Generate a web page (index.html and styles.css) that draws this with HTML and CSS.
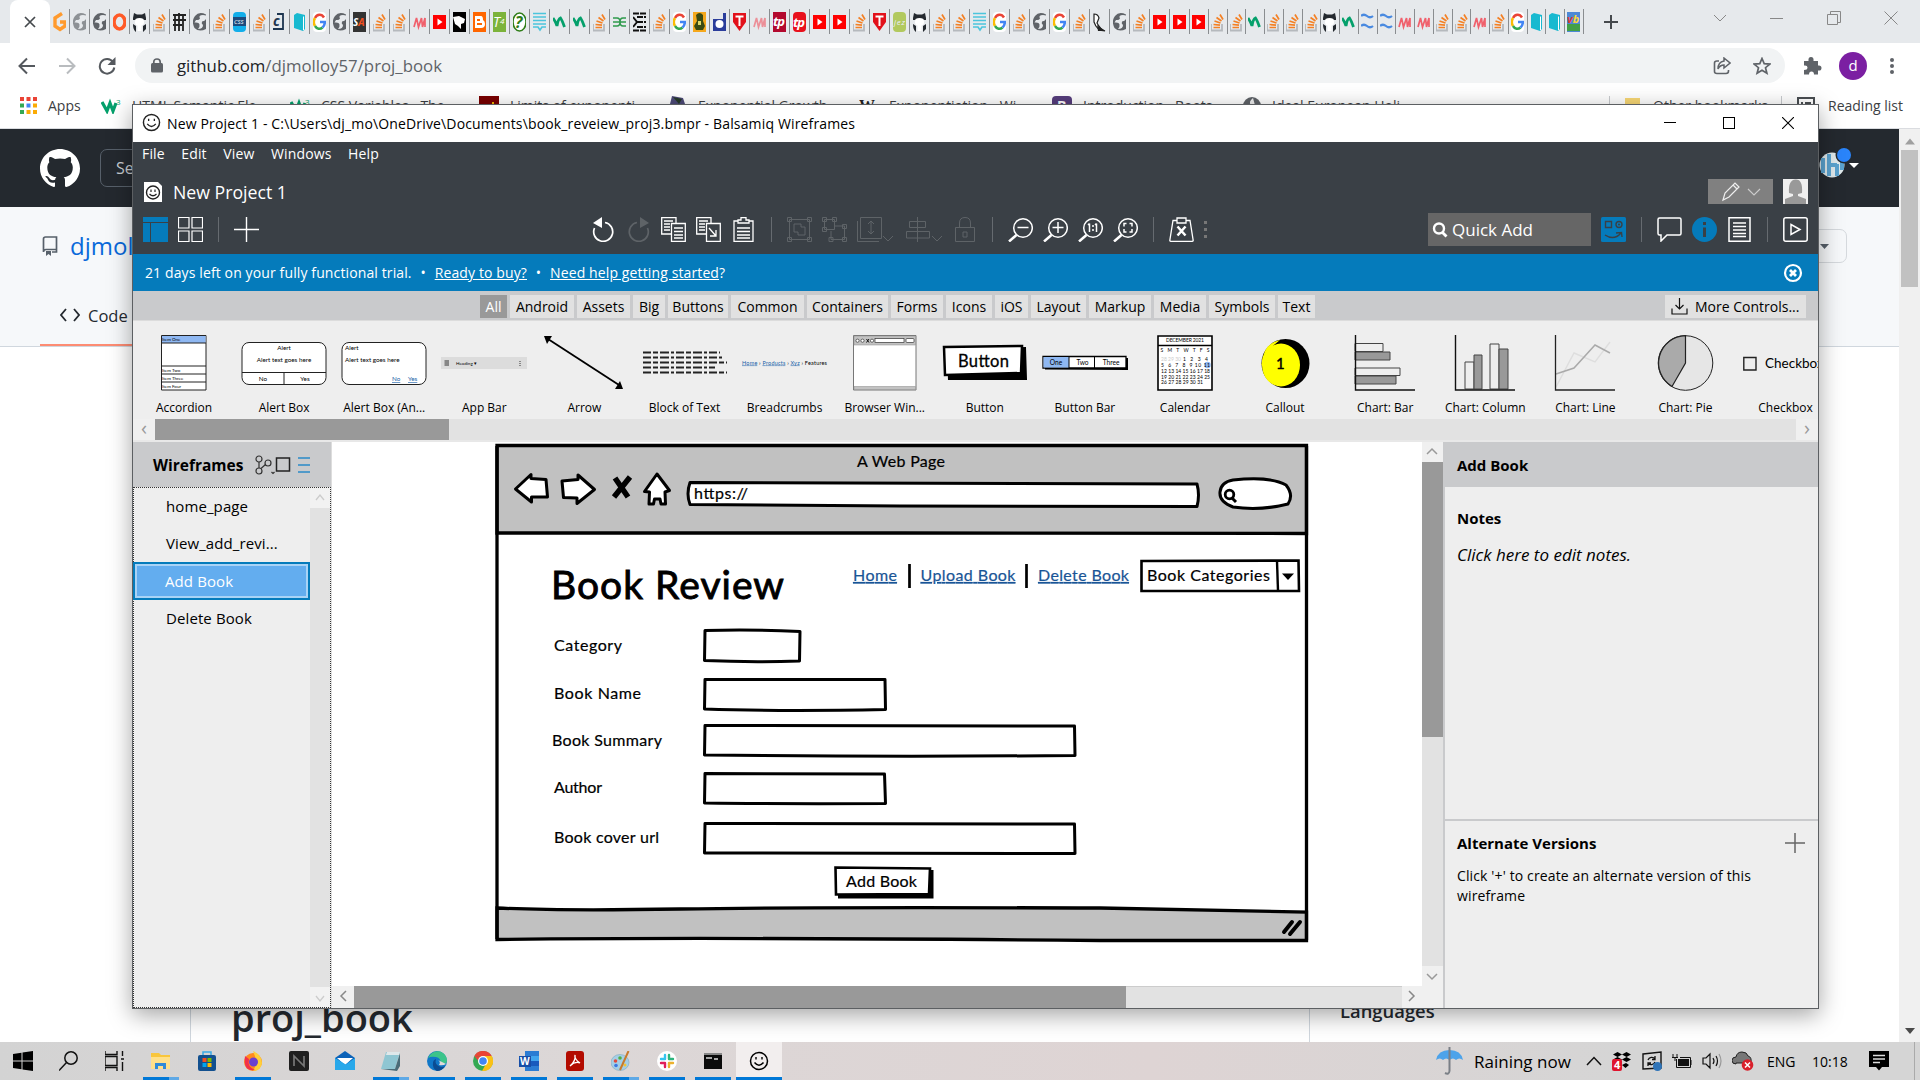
FILE: index.html
```html
<!DOCTYPE html>
<html lang="en">
<head>
<meta charset="utf-8">
<title>Desktop</title>
<link rel="stylesheet" href="styles.css">
</head>
<body>
<svg class="defs" width="0" height="0">
  <symbol id="so" viewBox="0 0 13 20"><path d="M0 12V18.500H11V12" fill="none" stroke="#b5b9bd" stroke-width="1.800"/><path d="M2.500 15.500H9M2.500 12.500L9 13.200M3.500 9L9.500 11M5.500 5.500L10.500 9M9 2.500L12 7.500" stroke="#f48024" stroke-width="1.700"/></symbol>
  <symbol id="globe" viewBox="0 0 13 20"><path d="M13 2.500Q6-1 2 4T1.500 16Q6 20.500 13 17Z" fill="#5f6368"/><path d="M13 3.500L10 3Q5 3 7 6.500 6 8.500 3 8L1.500 10.500Q6 10 6.500 12.500T5 17Q10 17 10 13 8 11.500 9 9.500 12 9 13 7Z" fill="#e7eaed"/></symbol>
  <symbol id="gh" viewBox="0 0 13 20"><path d="M1 1L4 2.500H9L12 1 13 6V8H0V6ZM0 12L3 14V20Q0 18 0 12ZM10 14L13 12V17L10 20Z" fill="#24292f"/><path d="M2.500 7Q6.500 5 10.500 7 12 13 8.500 13.500V19H4.500V13.500Q1 13 2.500 7Z" fill="#fff"/></symbol>
  <symbol id="goog" viewBox="0 0 13 20"><rect width="13" height="20" rx="4" fill="#fff"/><path d="M11 5.500A5.500 7 0 0 0 2 6" fill="none" stroke="#ea4335" stroke-width="2.500"/><path d="M2 6A6 7 0 0 0 2 14" fill="none" stroke="#fbbc05" stroke-width="2.500"/><path d="M2 14A5.500 7 0 0 0 9.500 15.500" fill="none" stroke="#34a853" stroke-width="2.500"/><path d="M7 10H11.800Q12 13 9.500 15.500" fill="none" stroke="#4285f4" stroke-width="2.500"/></symbol>
  <symbol id="yt" viewBox="0 0 13 20"><rect y="3" width="13" height="14" fill="#f00"/><path d="M4.500 6.500L9.500 10 4.500 13.500Z" fill="#fff"/></symbol>
  <symbol id="m" viewBox="0 0 13 20"><path d="M1 15L3.500 6 5.500 15 8.500 6 9.500 15 12 6V15" fill="none" stroke="#f0606c" stroke-width="1.700"/></symbol>
  <symbol id="w3" viewBox="0 0 13 20"><path d="M0 6Q3 10 4 14M4 14Q5 7 7.500 6 9 8 11.500 15" fill="none" stroke="#04a06b" stroke-width="2.800"/></symbol>
  <symbol id="lines" viewBox="0 0 13 20"><path d="M0 1.500H13M0 5H13M0 8.500H13M0 12H13M0 15H5L7 18 9 15H13" fill="none" stroke="#4cc5dc" stroke-width="1.600"/></symbol>
  <symbol id="book" viewBox="0 0 13 20"><path d="M1 3L4 1 12 3V17L10 19 1 16Z" fill="#18b9d0"/><path d="M10.500 4.500V18" stroke="#fff"/></symbol>
  <symbol id="waves" viewBox="0 0 13 20"><path d="M0 4Q3 1.500 6 4T12 4M0 14Q3 11.500 6 14T12 14" fill="none" stroke="#4a8ae0" stroke-width="2.200"/></symbol>
  <symbol id="tred" viewBox="0 0 13 20"><path d="M0 1H13V10L6.500 19 0 10Z" fill="#e2111b"/><path d="M2.500 4.500H10.500M6.500 4.500V14" stroke="#fff" stroke-width="2"/></symbol>
  <symbol id="smile" viewBox="0 0 20 20"><circle cx="10" cy="10" r="8.500" fill="none" stroke="currentColor" stroke-width="1.500"/><path d="M7 6V8.500M13 6V8.500M5.500 11.500Q10 17 14.500 11.500" fill="none" stroke="currentColor" stroke-width="1.400"/></symbol>
</svg>

<div class="chrome">
  <div class="tabstrip">
    <div class="active-tab"><svg width="12" height="12"><path d="M1 1L11 11M11 1L1 11" stroke="#45494d" stroke-width="1.700"/></svg></div>
    <i class="tab"><svg viewBox="0 0 13 20"><path d="M9 1.500L2 6V14L7 17.500 12 14V10H7" fill="none" stroke="#ff9a2e" stroke-width="3.400"/></svg></i><i class="tab faint"><svg><use href="#globe"/></svg></i><i class="tab"><svg><use href="#globe"/></svg></i><i class="tab"><svg viewBox="0 0 13 20"><ellipse cx="6.500" cy="10" rx="5.500" ry="7" fill="none" stroke="#ff5a28" stroke-width="3.500"/></svg></i><i class="tab"><svg><use href="#gh"/></svg></i><i class="tab"><svg><use href="#so"/></svg></i><i class="tab"><svg viewBox="0 0 13 20"><path d="M0 3H13M0 8H13M0 13H9M2 3V19M6 1V19M10 3V19" stroke="#222" stroke-width="1.800"/></svg></i><i class="tab"><svg><use href="#globe"/></svg></i><i class="tab"><svg><use href="#so"/></svg></i><i class="tab"><svg viewBox="0 0 13 20"><rect width="13" height="20" rx="4" fill="#12aeea"/><rect y="5" width="13" height="9" fill="#1d4a7d"/><text x="1" y="12" font-size="6" fill="#fff">CSS</text></svg></i><i class="tab"><svg><use href="#so"/></svg></i><i class="tab"><svg viewBox="0 0 13 20"><path d="M4 2H10V17H0" fill="none" stroke="#1d3550" stroke-width="1.800"/><text x="0" y="14" font-size="14" font-weight="bold" fill="#1d3550">c</text></svg></i><i class="tab"><svg><use href="#book"/></svg></i><i class="tab"><svg><use href="#goog"/></svg></i><i class="tab"><svg><use href="#globe"/></svg></i><i class="tab"><svg viewBox="0 0 13 20"><rect width="13" height="20" fill="#333"/><text x="0" y="14" font-size="10" font-weight="bold" fill="#fff">S<tspan fill="#f4511e">A</tspan></text></svg></i><i class="tab"><svg><use href="#so"/></svg></i><i class="tab"><svg><use href="#so"/></svg></i><i class="tab"><svg><use href="#m"/></svg></i><i class="tab"><svg><use href="#yt"/></svg></i><i class="tab"><svg viewBox="0 0 13 20"><rect width="13" height="20" fill="#000"/><path d="M0 5L6 4 12 7 11 11 8 12V17L5 14 2 12Z" fill="#fff"/></svg></i><i class="tab"><svg viewBox="0 0 13 20"><rect width="13" height="20" fill="#f60"/><path d="M2 4H8Q10 4 10 8 12 9 12 12 12 16 8 16H2Z" fill="#fff"/><path d="M4 8H7M4 12H9" stroke="#f60" stroke-width="1.800"/></svg></i><i class="tab"><svg viewBox="0 0 13 20"><rect width="13" height="20" fill="#7cb33b"/><text x="0" y="15" font-size="14" fill="#fff">T<tspan font-size="8" dy="-3">4</tspan></text></svg></i><i class="tab"><svg viewBox="0 0 13 20"><ellipse cx="6.500" cy="10" rx="6.500" ry="9" fill="#fff" stroke="#2f7d18" stroke-width="1.600"/><text x="2" y="16" font-size="16" font-weight="bold" fill="#2f7d18">?</text></svg></i><i class="tab"><svg><use href="#lines"/></svg></i><i class="tab"><svg><use href="#w3"/></svg></i><i class="tab"><svg><use href="#w3"/></svg></i><i class="tab"><svg><use href="#so"/></svg></i><i class="tab"><svg viewBox="0 0 13 20"><path d="M0 6H4Q7 6 7 10T4 14H0M0 10H13M13 6H10Q7 6 7 10T10 14H13" fill="none" stroke="#2f9a4c" stroke-width="1.500"/></svg></i><i class="tab"><svg viewBox="0 0 13 20"><path d="M0 1.500H13M0 18.500H13M4 5H13M4 10H13M4 15H13" stroke="#111" stroke-width="1.800" stroke-dasharray="6 1"/><path d="M0 5L4 10 0 15" fill="none" stroke="#111" stroke-width="2"/></svg></i><i class="tab"><svg><use href="#so"/></svg></i><i class="tab"><svg><use href="#goog"/></svg></i><i class="tab"><svg viewBox="0 0 13 20"><rect width="13" height="20" fill="#f5a81c"/><path d="M3 3Q6.500-1 10 3V9L12 14 10 18H3L1 14 4 9Z" fill="#3b4a12"/><path d="M5 9H8V13H5Z" fill="#dcd76a"/></svg></i><i class="tab"><svg viewBox="0 0 13 20"><path d="M10 1H13V19H0V7H10Z" fill="#2b3d9b"/><ellipse cx="6.500" cy="12" rx="4" ry="4" fill="#fff"/></svg></i><i class="tab"><svg><use href="#tred"/></svg></i><i class="tab faint"><svg><use href="#m"/></svg></i><i class="tab"><svg viewBox="0 0 13 20"><rect width="13" height="20" fill="#b3092e"/><text x="0" y="14" font-size="13" font-weight="bold" fill="#fff" textLength="12">tp</text></svg></i><i class="tab"><svg viewBox="0 0 13 20"><rect width="13" height="20" rx="4" fill="#e8101c"/><text x="0" y="15" font-size="13" font-weight="bold" fill="#fff" textLength="12">tp</text></svg></i><i class="tab"><svg><use href="#yt"/></svg></i><i class="tab"><svg><use href="#yt"/></svg></i><i class="tab"><svg><use href="#so"/></svg></i><i class="tab"><svg><use href="#tred"/></svg></i><i class="tab"><svg viewBox="0 0 13 20"><rect width="13" height="20" rx="4" fill="#b2c95e"/><text x="1" y="13" font-size="8" font-style="italic" fill="#eef" textLength="11">jez</text></svg></i><i class="tab"><svg><use href="#gh"/></svg></i><i class="tab"><svg><use href="#so"/></svg></i><i class="tab"><svg><use href="#so"/></svg></i><i class="tab"><svg><use href="#lines"/></svg></i><i class="tab"><svg><use href="#goog"/></svg></i><i class="tab"><svg><use href="#so"/></svg></i><i class="tab"><svg><use href="#globe"/></svg></i><i class="tab"><svg><use href="#goog"/></svg></i><i class="tab"><svg><use href="#so"/></svg></i><i class="tab"><svg viewBox="0 0 13 20"><path d="M1 2Q5 2 6 6L4 11Q7 17 12 19Q4 19 1 10Z" fill="#fff" stroke="#222" stroke-width="1.200"/><path d="M4 13L12 19H5Z" fill="#222"/></svg></i><i class="tab"><svg><use href="#globe"/></svg></i><i class="tab"><svg><use href="#so"/></svg></i><i class="tab"><svg><use href="#yt"/></svg></i><i class="tab"><svg><use href="#yt"/></svg></i><i class="tab slim"><svg><use href="#yt"/></svg></i><i class="tab slim"><svg><use href="#so"/></svg></i><i class="tab slim"><svg><use href="#so"/></svg></i><i class="tab slim"><svg><use href="#w3"/></svg></i><i class="tab slim"><svg><use href="#so"/></svg></i><i class="tab slim"><svg><use href="#so"/></svg></i><i class="tab slim"><svg><use href="#so"/></svg></i><i class="tab slim"><svg><use href="#gh"/></svg></i><i class="tab slim"><svg><use href="#w3"/></svg></i><i class="tab slim"><svg><use href="#waves"/></svg></i><i class="tab slim"><svg><use href="#waves"/></svg></i><i class="tab slim"><svg><use href="#m"/></svg></i><i class="tab slim"><svg><use href="#m"/></svg></i><i class="tab slim"><svg><use href="#so"/></svg></i><i class="tab slim"><svg><use href="#so"/></svg></i><i class="tab slim"><svg><use href="#m"/></svg></i><i class="tab slim"><svg><use href="#so"/></svg></i><i class="tab slim"><svg><use href="#goog"/></svg></i><i class="tab slim"><svg><use href="#book"/></svg></i><i class="tab slim"><svg><use href="#book"/></svg></i><i class="tab slim"><svg viewBox="0 0 13 20"><rect width="13" height="20" fill="#4d88d6"/><text x="0" y="11" font-size="11" font-weight="bold" fill="#e53935">v<tspan fill="#fdd835">b</tspan></text><rect y="12" width="13" height="7" fill="#43a047"/></svg></i>
    <svg class="newtab" width="16" height="16"><path d="M8 1V15M1 8H15" stroke="#45494d" stroke-width="2"/></svg>
    <div class="win-buttons">
      <svg width="14" height="14"><path d="M1 4L7 10 13 4" fill="none" stroke="#888" stroke-width="1"/></svg>
      <svg width="14" height="14"><path d="M0 7.500H13" stroke="#888"/></svg>
      <svg width="14" height="14"><path d="M.500 3.500H10.500V13.500H.500ZM3.500 3V.500H13.500V11.500H11" fill="none" stroke="#888"/></svg>
      <svg width="14" height="14"><path d="M.500.500L13.500 13.500M13.500.500L.500 13.500" stroke="#888"/></svg>
    </div>
  </div>
  <div class="navbar">
    <svg width="18" height="18"><path d="M17 9H2M9 1.500L1.500 9 9 16.500" fill="none" stroke="#55595e" stroke-width="2"/></svg>
    <svg width="18" height="18"><path d="M1 9H16M9 1.500L16.500 9 9 16.500" fill="none" stroke="#b9bcbf" stroke-width="2"/></svg>
    <svg width="18" height="18"><path d="M15 5A7.300 7.300 0 1 0 16.300 10.500" fill="none" stroke="#55595e" stroke-width="2"/><path d="M17.500 0V8H9.500Z" fill="#55595e"/></svg>
    <div class="omnibox">
      <svg width="12" height="15"><rect y="5" width="12" height="9.500" rx="1.500" fill="#5f6368"/><path d="M2.800 6V4Q2.800 1 6 1T9.200 4V6" fill="none" stroke="#5f6368" stroke-width="1.700"/></svg>
      <span class="url">github.com<em>/djmolloy57/proj_book</em></span>
      <svg width="18" height="18"><path d="M6 4H4Q1.500 4 1.500 6V14.500Q1.500 16.500 4 16.500H13Q15.500 16.500 15.500 14V13" fill="none" stroke="#5f6368" stroke-width="1.600"/><path d="M11 1L17 6 11 11V8Q7 8 5 12 5 5 11 4Z" fill="none" stroke="#5f6368" stroke-width="1.500"/></svg>
      <svg width="18" height="18"><path d="M9 1.500L11.200 6.700 16.800 7.100 12.500 10.700 13.900 16.200 9 13.200 4.100 16.200 5.500 10.700 1.200 7.100 6.800 6.700Z" fill="none" stroke="#5f6368" stroke-width="1.700"/></svg>
    </div>
    <svg class="puzzle" width="19" height="19"><path d="M1 5H5.500Q5 1 8 1T10.500 5H15V9.500Q18.500 9 18.500 12T15 14.500V18.500H11Q11 15.500 8.500 15.500T6 18.500H1V14Q4.500 14 4.500 11.500T1 9.500Z" fill="#5f6368"/></svg>
    <div class="profile">d</div>
    <svg class="dots" width="6" height="18"><circle cx="3" cy="3" r="2"/><circle cx="3" cy="9" r="2"/><circle cx="3" cy="15" r="2"/></svg>
  </div>
  <div class="bookmarks">
    <span class="bm"><svg width="17" height="17"><path d="M0 0h4v4H0zM6.500 0h4v4h-4zM13 0h4v4h-4z" fill="#ea4335"/><path d="M0 6.500h4v4H0zM0 13h4v4H0z" fill="#34a853"/><path d="M6.500 6.500h4v4h-4z" fill="#4285f4"/><path d="M13 6.500h4v4h-4zM6.500 13h4v4h-4zM13 13h4v4h-4z" fill="#fbab05"/></svg>Apps</span>
    <span class="bm"><svg width="20" height="16"><path d="M1 4L6 13 9 5 12 13 15 5" fill="none" stroke="#04a06b" stroke-width="3.200"/><text x="15" y="7" font-size="8" fill="#04a06b">3</text></svg>HTML Semantic Ele...</span>
    <span class="bm"><svg width="20" height="16"><path d="M1 4L6 13 9 5 12 13 15 5" fill="none" stroke="#04a06b" stroke-width="3.200"/><text x="15" y="7" font-size="8" fill="#04a06b">3</text></svg>CSS Variables - The...</span>
    <span class="bm"><svg width="20" height="20"><rect width="20" height="20" fill="#7a0000"/><path d="M3 9H7V14M9 9H12M14 6V14" stroke="#f0b400" stroke-width="2"/></svg>Limits of exponenti...</span>
    <span class="bm"><svg width="18" height="20"><path d="M3 0L14 2 17 11 9 18 0 12Z" fill="#4d4a78"/><path d="M4 1L13 3 10 8Z" fill="#263a28"/></svg>Exponential Growth...</span>
    <span class="bm"><svg width="19" height="16"><text x="0" y="13" font-size="16" font-family="Liberation Serif, serif" font-weight="bold" fill="#222">W</text></svg>Exponentiation - Wi...</span>
    <span class="bm"><svg width="20" height="20"><rect width="20" height="20" rx="4" fill="#563d7c"/><text x="5" y="15" font-size="14" font-weight="bold" fill="#fff">B</text></svg>Introduction · Boots...</span>
    <span class="bm"><svg width="18" height="18"><circle cx="9" cy="9" r="9" fill="#5f6368"/><path d="M10 1Q5 5 8 8L5 10 8 16 13 12Z" fill="#eee"/></svg>Ideal European Holi...</span>
    <span class="bm">»</span>
    <span class="bm ruled"><svg width="15" height="16"><path d="M0 0H15V15H0Z" fill="#f8d775"/></svg>Other bookmarks</span>
    <span class="bm ruled"><svg width="18" height="18"><rect x="1" y="1" width="16" height="15" fill="none" stroke="#4a4e52" stroke-width="2"/><path d="M4 6H6M8 6H14M4 10H6M8 10H14" stroke="#4a4e52" stroke-width="2"/></svg>Reading list</span>
  </div>
  <div class="page">
    <div class="site">
      <div class="gh-header">
        <svg class="octocat" width="40" height="39" viewBox="0 0 16 16" preserveAspectRatio="none"><path fill="#fff" d="M8 0C3.580 0 0 3.580 0 8c0 3.540 2.290 6.530 5.470 7.590.400.070.550-.170.550-.380 0-.190-.010-.820-.010-1.490-2.010.370-2.530-.490-2.690-.940-.090-.230-.480-.940-.820-1.130-.280-.150-.680-.520-.010-.530.630-.010 1.080.580 1.230.820.720 1.210 1.870.870 2.330.660.070-.520.280-.870.510-1.070-1.780-.200-3.640-.890-3.640-3.950 0-.870.310-1.590.820-2.150-.080-.200-.360-1.020.080-2.120 0 0 .670-.210 2.200.820.640-.180 1.320-.270 2-.270s1.360.090 2 .270c1.530-1.040 2.200-.820 2.200-.820.440 1.100.160 1.920.080 2.120.510.560.820 1.270.820 2.150 0 3.070-1.870 3.750-3.650 3.950.290.250.540.730.540 1.480 0 1.070-.010 1.930-.010 2.200 0 .210.150.460.550.380A8.010 8.010 0 0 0 16 8c0-4.420-3.580-8-8-8z"/></svg>
        <div class="gh-search">Se</div>
        <div class="gh-user"><svg width="42" height="34"><circle cx="14" cy="19" r="12.500" fill="#dfe9ec"/><path d="M5 12V27M11 8V30M19 18V30M24 14V24M11 19H19" stroke="#5ba3cf" stroke-width="4"/><circle cx="26" cy="9" r="8.500" fill="#24292f"/><circle cx="26" cy="9" r="7" fill="#2a84fa"/><path d="M31 17H41L36 22Z" fill="#fff"/></svg></div>
      </div>
      <div class="repo-head">
        <div class="repo-line">
          <svg width="16" height="20" viewBox="0 0 16 20"><path d="M1.500 16V3Q1.500 1 3.500 1H14.500V15.500M1.500 16Q1.500 13.500 4 13.500H14.500M10 16H14.500V13" fill="none" stroke="#57606a" stroke-width="1.700"/><path d="M4 15V20L6.500 18 9 20V15Z" fill="#57606a"/></svg>
          <span>djmol</span>
          <div class="split"><svg width="9" height="5"><path d="M0 0H9L4.500 5Z" fill="#57606a"/></svg></div>
        </div>
        <div class="repo-tab"><svg width="20" height="16"><path d="M6 2L1 8 6 14M14 2L19 8 14 14" fill="none" stroke="#24292f" stroke-width="1.800"/></svg>Code</div>
      </div>
      <div class="repo-body">
        <div class="readme">proj_book</div>
        <div class="side">Languages</div>
      </div>
    </div>
    <div class="page-scroll"><svg width="10" height="7"><path d="M0 6.500L5 0.500 10 6.500Z" fill="#a0a0a0"/></svg><div class="thumb"></div><svg class="down" width="10" height="6"><path d="M0 0H10L5 6Z" fill="#4a4a4a"/></svg></div>
  </div>
</div>

<div class="app">
  <div class="titlebar">
    <svg width="19" height="19"><use href="#smile"/></svg>
    <span class="title">New Project 1 - C:\Users\dj_mo\OneDrive\Documents\book_reveiew_proj3.bmpr - Balsamiq Wireframes</span>
    <svg width="12" height="12"><path d="M0 5.500H12" stroke="#000"/></svg>
    <svg width="12" height="12"><rect x=".5" y=".5" width="11" height="11" fill="none" stroke="#000"/></svg>
    <svg width="12" height="12"><path d="M0 0L12 12M12 0L0 12" stroke="#000" stroke-width="1.100"/></svg>
  </div>
  <div class="dark">
    <div class="menu"><span>File</span><span>Edit</span><span>View</span><span>Windows</span><span>Help</span></div>
    <div class="project">
      <svg width="18" height="20"><path d="M0 0H14L18 4V20H0Z" fill="#fff"/><circle cx="9" cy="10.500" r="6.500" fill="none" stroke="#222" stroke-width="1.400"/><path d="M7 7.500V10M11 7.500V10M5.500 12Q9 15.500 12.500 12" fill="none" stroke="#222" stroke-width="1.200"/></svg>
      <span class="name">New Project 1</span>
      <div class="edit"><svg width="40" height="20"><path d="M2 18L4 11 14 1 18 5 8 15ZM12 3L16 7" fill="none" stroke="#eee" stroke-width="1.200"/><path d="M27 7L33 13 39 7" fill="none" stroke="#ccc" stroke-width="1.100"/></svg></div>
      <svg width="25" height="25"><rect width="25" height="25" fill="#efefef"/><path d="M6 14Q5 1 12.500 0.500T19 14L15 15V17L23 20V25H2V20L10 17V15Z" fill="#999"/></svg>
    </div>
    <div class="toolbar">
      <div class="group left">
        <svg width="25" height="25"><rect width="25" height="25" fill="#057bbb"/><path d="M0 5.500H25M7.500 5.500V25" stroke="#3a4046"/></svg>
        <svg width="25" height="25"><path d="M.500.500H11V11H.500ZM14 .500H24.500V11H14ZM.500 14H11V24.500H.500ZM14 14H24.500V24.500H14Z" fill="none" stroke="#fff" stroke-width="1.200"/></svg>
        <i class="sep"></i>
        <svg width="25" height="25"><path d="M12.500 0V25M0 12.500H25" stroke="#fff" stroke-width="1.400"/></svg>
      </div>
      <div class="group mid">
        <svg width="25" height="25"><path d="M3.500 11A9.500 9.500 0 1 0 14 5.500" fill="none" stroke="#fff" stroke-width="1.700"/><path d="M2 6L11 0V11Z" fill="#fff"/></svg>
        <svg class="off" width="25" height="25"><path d="M21.500 11A9.500 9.500 0 1 1 11 5.500" fill="none" stroke="#fff" stroke-width="1.700"/><path d="M23 6L14 0V11Z" fill="#fff"/></svg>
        <svg width="25" height="25" fill="none" stroke="#fff" stroke-width="1.300"><path d="M10 17H.700V.700H15V6M10.500 6.500H24.300V24.300H10.500ZM3 4H12M3 7H9M3 10H9M3 13H9M13 11H22M13 14.500H22M13 18H22M13 21H22"/></svg>
        <svg width="25" height="25" fill="none" stroke="#fff" stroke-width="1.300"><path d="M10 17H.700V.700H15V6M10.500 6.500H24.300V24.300H10.500ZM3 4H12M3 7H9M3 10H9M3 13H9M13 11L20 19M20 13V19H14"/></svg>
        <svg width="25" height="25" fill="none" stroke="#fff" stroke-width="1.300"><path d="M7 4H3V24.300H22V4H18M7 6V3H10V.700H15V3H18V6ZM6 11H19M6 14.500H19M6 18H19M6 21H19"/></svg>
        <i class="sep"></i>
        <svg class="off" width="25" height="25" fill="none" stroke="#fff"><path d="M2.500 2.500H22.500V22.500H2.500ZM.500.500H4.500V4.500H.500ZM20.500.500H24.500V4.500H20.500ZM.500 20.500H4.500V24.500H.500ZM20.500 20.500H24.500V24.500H20.500ZM7 7H14V10H18V18H11V15H7Z"/></svg>
        <svg class="off" width="25" height="25" fill="none" stroke="#fff"><path d="M2.500 2.500H12.500V12.500H2.500ZM.500.500H4.500V4.500H.500ZM10.500.500H14.500V4.500H10.500ZM.500 10.500H4.500V14.500H.500ZM12.500 9H22.500V22.500H9V14M20.500 7.500H24.500V11.500H20.500ZM7 20.500H11V24.500H7ZM20.500 20.500H24.500V24.500H20.500Z"/></svg>
        <svg class="off" width="39" height="25" fill="none" stroke="#fff"><path d="M3.500.500H24.500V21.500H3.500ZM.500 4V24.500H22M14 4V17M11 7L14 4 17 7M11 14L14 17 17 14M26 19L31 24 36 19"/></svg>
        <svg class="off" width="36" height="25" fill="none" stroke="#fff"><path d="M11.500 0V25M3.500 4.500H19.500V10.500H3.500ZM.500 14.500H23.500V21H.500ZM26 19L31 24 36 19"/></svg>
        <svg class="off" width="25" height="25" fill="none" stroke="#fff"><path d="M3.500 10.500H22.500V24.500H3.500ZM7.500 10V6Q7.500.500 13 .500T18.500 6V10M11 15H15V20H11Z"/></svg>
        <i class="sep"></i>
        <svg width="25" height="25" fill="none" stroke="#fff" stroke-width="1.500"><circle cx="15" cy="11" r="9.300"/><path d="M9.500 10.500H20.500"/><path d="M8.500 18L1 24.500" stroke-width="2.500"/></svg>
        <svg width="25" height="25" fill="none" stroke="#fff" stroke-width="1.500"><circle cx="15" cy="11" r="9.300"/><path d="M9.500 10.500H20.500M15 5V16"/><path d="M8.500 18L1 24.500" stroke-width="2.500"/></svg>
        <svg width="25" height="25" fill="none" stroke="#fff" stroke-width="1.500"><circle cx="15" cy="11" r="9.300"/><path d="M11.500 6.500V15M18.500 6.500V15M10 8L11.500 6.500M17 8L18.500 6.500M15 8V10M15 12V14"/><path d="M8.500 18L1 24.500" stroke-width="2.500"/></svg>
        <svg width="25" height="25" fill="none" stroke="#fff" stroke-width="1.500"><circle cx="15" cy="11" r="9.300"/><path d="M13.500 6.500H11V9.500M16.500 6.500H19V9.500M13.500 15H11V12M16.500 15H19V12"/><path d="M8.500 18L1 24.500" stroke-width="2.500"/></svg>
        <i class="sep"></i>
        <svg width="25" height="25" fill="none" stroke="#fff" stroke-width="1.300"><path d="M8 3.500H4L.800 23.500Q1 24.300 2 24.300H23Q24 24.300 24.200 23.500L21 3.500H17M8 1H17V6H8Z"/><path d="M8.500 9.500L16.500 18.500M16.500 9.500L8.500 18.500" stroke-width="2.500"/></svg>
        <svg width="4" height="20" fill="#777"><path d="M0 1H3V4H0ZM0 8H3V11H0ZM0 15H3V18H0Z"/></svg>
      </div>
      <div class="group right">
        <div class="quick"><svg width="16" height="16"><circle cx="7" cy="6.500" r="5" fill="none" stroke="#fff" stroke-width="2.400"/><path d="M10 10L14.500 14.500" stroke="#fff" stroke-width="2.800"/></svg>Quick Add</div>
        <svg width="25" height="25"><rect width="25" height="25" rx="1.500" fill="#057bbb"/><path d="M4.500 4.500H10.500V10.500H4.500ZM4 18Q13 24 20 16M15 16L20.500 15.500 21 20" fill="none" stroke="#3a4046" stroke-width="1.400"/><circle cx="18" cy="7.500" r="3" fill="none" stroke="#3a4046" stroke-width="1.400"/><circle cx="18" cy="7.500" r="1" fill="#3a4046"/></svg>
        <i class="sep"></i>
        <svg width="25" height="25" fill="none" stroke="#fff" stroke-width="1.500"><path d="M2.500 1H22.500Q24 1 24 2.500V16.500Q24 18 22.500 18H10L4 24V18H2.500Q1 18 1 16.500V2.500Q1 1 2.500 1Z"/></svg>
        <svg width="25" height="25"><circle cx="12.500" cy="12.500" r="12.500" fill="#057bbb"/><path d="M12.500 5V8M12.500 10.500V20" stroke="#3a4046" stroke-width="3"/></svg>
        <svg width="25" height="25" fill="none" stroke="#fff" stroke-width="1.500"><path d="M2 .800H23V24.200H2ZM6 6H19M6 9.500H19M6 13H19M6 16.500H19M6 19.500H19"/></svg>
        <i class="sep"></i>
        <svg width="25" height="25" fill="none" stroke="#fff" stroke-width="1.500"><rect x=".8" y=".8" width="23.400" height="23.400" rx="2"/><path d="M8 7.500L17 12.500 8 17.500Z"/></svg>
      </div>
    </div>
  </div>
  <div class="trial"><span>21 days left on your fully functional trial.</span><b>•</b><u>Ready to buy?</u><b>•</b><u>Need help getting started</u><span>?</span><svg width="20" height="20"><circle cx="10" cy="10" r="8" fill="none" stroke="#fff" stroke-width="2.200"/><path d="M7 7L13 13M13 7L7 13" stroke="#fff" stroke-width="2.800"/></svg></div>
  <div class="catbar">
    <div class="cats"><span class="on">All</span><span>Android</span><span>Assets</span><span>Big</span><span>Buttons</span><span>Common</span><span>Containers</span><span>Forms</span><span>Icons</span><span>iOS</span><span>Layout</span><span>Markup</span><span>Media</span><span>Symbols</span><span>Text</span></div>
    <div class="more-controls"><svg width="17" height="17"><path d="M1 10.500V16H16V10.500M8.500 0V11M4.500 7L8.500 11 12.500 7" fill="none" stroke="#111" stroke-width="1.200"/></svg>More Controls...</div>
  </div>
  <div class="library">
    <figure><svg viewBox="0 0 86 56"><path d="M20.500.500H65V55H20.500Z" fill="#fff" stroke="#222"/><path d="M21 1H64.500V8H21Z" fill="#8fb8f2"/><path d="M20 8H65M20 31H65M20 39H65M20 47H65" stroke="#222"/><g font-size="4.500"><text x="21" y="6">Item One</text><text x="21" y="36.500">Item Two</text><text x="21" y="44.500">Item Three</text><text x="21" y="52.500">Item Four</text></g></svg><figcaption>Accordion</figcaption></figure>
    <figure><svg viewBox="0 0 86 56"><rect x="1" y="7.500" width="84" height="42" rx="7" fill="#fff" stroke="#222"/><path d="M1 37.500H85M43 37.500V49" stroke="#222"/><g font-size="6.300" text-anchor="middle"><text x="43" y="15">Alert</text><text x="43" y="26.500">Alert text goes here</text><text x="22" y="46">No</text><text x="64" y="46">Yes</text></g></svg><figcaption>Alert Box</figcaption></figure>
    <figure><svg viewBox="0 0 86 56"><rect x="1" y="7.500" width="84" height="42" rx="7" fill="#fff" stroke="#222"/><g font-size="6.300"><text x="4" y="15">Alert</text><text x="4" y="26.500">Alert text goes here</text><g fill="#1a5fa8" text-decoration="underline"><text x="51" y="46">No</text><text x="67" y="46">Yes</text></g></g></svg><figcaption>Alert Box (An...</figcaption></figure>
    <figure><svg viewBox="0 0 86 56"><path d="M0 22H86V34H0Z" fill="#dcdcdc"/><path d="M3.500 26H8M3.500 28H8M3.500 30H8M79 26V27M79 28V29M79 30V31" stroke="#333"/><text x="15" y="29.500" font-size="4.600">Heading ▾</text></svg><figcaption>App Bar</figcaption></figure>
    <figure><svg viewBox="0 0 86 56"><path d="M7 4L78 50" stroke="#000" stroke-width="1.800"/><path d="M3 1H11L6 9ZM82 54H74L79 46Z"/></svg><figcaption>Arrow</figcaption></figure>
    <figure><svg viewBox="0 0 86 56"><path d="M1 17.500H78M1 22.500H80M1 27.500H85M1 32.500H73M1 37.500H85" stroke="#222" stroke-width="1.900" stroke-dasharray="8 2 5 2 9 2 3 2"/></svg><figcaption>Block of Text</figcaption></figure>
    <figure><svg viewBox="0 0 86 56"><text x="0" y="29.500" font-size="5.500" textLength="85"><tspan fill="#1a5fa8" text-decoration="underline">Home</tspan> › <tspan fill="#1a5fa8" text-decoration="underline">Products</tspan> › <tspan fill="#1a5fa8" text-decoration="underline">Xyz</tspan> › Features</text></svg><figcaption>Breadcrumbs</figcaption></figure>
    <figure><svg viewBox="0 0 86 56"><path d="M11.500.500H74V55H11.500Z" fill="#fff" stroke="#777"/><path d="M12 1H73.500V10H12ZM12 51.500H73.500V54.500H12Z" fill="#c2c2c2" stroke="#888" stroke-width=".5"/><rect x="33" y="3.500" width="29" height="4" fill="#fff" stroke="#333" stroke-width=".7"/><rect x="64" y="3.500" width="8" height="4" rx="1" fill="#fff" stroke="#333" stroke-width=".7"/><path d="M24.500 4L27 7.500M27 4L24.500 7.500" stroke="#111"/><circle cx="15.500" cy="5.700" r="1.600" fill="#fff" stroke="#333" stroke-width=".7"/><circle cx="20.500" cy="5.700" r="1.600" fill="#fff" stroke="#333" stroke-width=".7"/><circle cx="30" cy="5.700" r="1.600" fill="#fff" stroke="#333" stroke-width=".7"/></svg><figcaption>Browser Win...</figcaption></figure>
    <figure><svg viewBox="0 0 86 56"><path d="M5 14L84 12 85 45 6 45Z"/><path d="M2 12L80 11 79 38 3 40Z" fill="#fff" stroke="#000" stroke-width="2.500"/><text x="16" y="31.500" font-size="16.500" textLength="51" stroke="#000" stroke-width=".3">Button</text></svg><figcaption>Button</figcaption></figure>
    <figure><svg viewBox="0 0 86 56"><path d="M3 23H86V35L3 34.500Z"/><path d="M1 21.500H84V33H1Z" fill="#fff" stroke="#000" stroke-width="1.300"/><path d="M1.500 22H27V32.500H1.500Z" fill="#8fb8f2"/><path d="M27 21V33M52.500 21V33" stroke="#000"/><g font-size="6.600" text-anchor="middle"><text x="14" y="29.500">One</text><text x="40.500" y="29.500">Two</text><text x="69" y="29.500">Three</text></g></svg><figcaption>Button Bar</figcaption></figure>
    <figure><svg viewBox="0 0 86 56"><path d="M16 1H70V55H16Z" fill="#fff" stroke="#000" stroke-width="1.600"/><path d="M16 10.500H70" stroke="#000" stroke-width="1.600"/><circle cx="65.500" cy="30" r="3.200" fill="#8fb8f2"/><g font-size="5"><text x="24" y="7" textLength="38">DECEMBER 2021</text><text x="18.500" y="17" textLength="49" xml:space="preserve">S  M  T  W  T  F  S</text><text x="19" y="26" fill="#ccc" textLength="20">28 29 30</text><text x="41" y="26" textLength="25" xml:space="preserve">1  2  3  4</text><text x="19" y="32" textLength="49" xml:space="preserve">5  6  7  8  9 10 11</text><text x="19" y="38" textLength="49">12 13 14 15 16 17 18</text><text x="19" y="43.500" textLength="49">19 20 21 22 23 24 25</text><text x="19" y="49" textLength="42">26 27 28 29 30 31</text></g></svg><figcaption>Calendar</figcaption></figure>
    <figure><svg viewBox="0 0 86 56"><ellipse cx="43.500" cy="28.500" rx="24" ry="24.500"/><ellipse cx="39" cy="30" rx="19" ry="21.500" fill="#ff0"/><path d="M19.500 30Q21 8 38 5Q24 15 21 31" fill="#ff0"/><text x="34" y="34" font-size="15" stroke="#000" stroke-width=".4">1</text></svg><figcaption>Callout</figcaption></figure>
    <figure><svg viewBox="0 0 86 56" stroke="#444"><path d="M13 8.500H41V16.500H13ZM13 33H58V40.500H13Z" fill="#eee"/><path d="M13 17H48V25H13ZM13 41H54V49H13Z" fill="#999"/><path d="M13.500 0V55H73" fill="none" stroke="#111" stroke-width="1.400"/></svg><figcaption>Chart: Bar</figcaption></figure>
    <figure><svg viewBox="0 0 86 56" stroke="#444"><path d="M23 27H32V54H23ZM48 9H57V54H48Z" fill="#eee"/><path d="M32 20H40V54H32ZM57 14H66V54H57Z" fill="#999"/><path d="M13.500 0V55H73" fill="none" stroke="#111" stroke-width="1.400"/></svg><figcaption>Chart: Column</figcaption></figure>
    <figure><svg viewBox="0 0 86 56" fill="none"><path d="M14 52L32 18 53 27 68 7" stroke="#dedede" stroke-width="1.400"/><path d="M14 39L32 33 53 10 68 18" stroke="#aaa" stroke-width="1.500"/><path d="M13.500 0V55H73" stroke="#222" stroke-width="1.300"/></svg><figcaption>Chart: Line</figcaption></figure>
    <figure><svg viewBox="0 0 86 56"><circle cx="43.500" cy="28" r="27.300" fill="#e6e6e6" stroke="#222"/><path d="M43.500 28V.700A27.300 27.300 0 0 0 30 51.500Z" fill="#aaa" stroke="#222" stroke-width="1.200"/></svg><figcaption>Chart: Pie</figcaption></figure>
    <figure><svg viewBox="0 0 86 56"><path d="M.800 22.500H13V35H.800Z" fill="none" stroke="#222" stroke-width="1.400"/><text x="22" y="33" font-size="13.500">Checkbox</text></svg><figcaption>Checkbox</figcaption></figure>
  </div>
  <div class="hscroll"><i>‹</i><div class="track"><div class="thumb"></div></div><i>›</i></div>
  <div class="work">
    <div class="nav">
      <div class="nav-head"><strong>Wireframes</strong><svg width="58" height="20"><g fill="none" stroke="#333" stroke-width="1.200"><circle cx="4" cy="4" r="3"/><circle cx="4" cy="16" r="3"/><circle cx="13" cy="8" r="3"/><path d="M4 7V13M10.500 9.500L6 13.500M16.500 17L18 18.500 19.500 17"/></g><path d="M21.500 3H34.500V16H21.500Z" fill="none" stroke="#222" stroke-width="1.500"/><path d="M43 3H55M43 10H55M43 17H55" stroke="#2a8bc7" stroke-width="1.500"/></svg></div>
      <div class="nav-list">
        <div class="items"><div>home_page</div><div>View_add_revi...</div><div class="sel">Add Book</div><div>Delete Book</div></div>
        <div class="nav-scroll"><svg width="20" height="20"><path d="M6 12L10 7 14 12" fill="none" stroke="#ccc" stroke-width="1.300"/></svg><div></div><svg width="20" height="20"><path d="M6 9L10 14 14 9" fill="none" stroke="#ccc" stroke-width="1.300"/></svg></div>
      </div>
    </div>
    <div class="canvas">
      <div class="sheet">
        <svg class="wire" width="1090" height="544" viewBox="332 442 1090 544" fill="none" stroke="#000" stroke-width="3.300">
          <path d="M497 445.500L700 445H1306.500L1307 940 1100 940.500 700 938.500 497 939Z" fill="#fff" stroke="none"/>
          <path d="M497 445.500H1306.500V533.500L900 533 497 533Z" fill="#c1c1c1"/>
          <path d="M497 908Q560 911 680 909T1100 908L1306.500 912V940.500L1100 940.500Q700 937 497 939.500Z" fill="#c1c1c1"/>
          <path d="M497 446V939M1306.500 446V940"/>
          <g fill="#fff" stroke-width="3" stroke-linejoin="round">
            <path d="M515.500 489L531 474.500V478.500L546 479.500 547.500 497 531.500 497V502Z"/>
            <path d="M594.500 489.500L578 475V479.500L562 481 563.500 497.500 577 498V503.500Z"/>
            <path d="M657 474L644.500 491.500 649.500 492 649 504H653.500L654.500 499H660L661 504H665.500L665 492 669.500 490.500Z"/>
            <path d="M690 482.500L1197 484Q1200 495 1197 506.500L900 506 690 504.500Q686 494 690 482.500Z"/>
            <path d="M1233 480Q1270 476 1286 485Q1294 495 1288 504Q1260 511 1233 507Q1219 502 1220 492T1233 480Z"/>
          </g>
          <path d="M615 478L628 497M630 477L614 497" stroke-width="5.500"/>
          <circle cx="1229.500" cy="494.500" r="4.300" stroke-width="2.800"/><path d="M1232 498L1236 502" stroke-width="3"/>
          <path d="M909.500 564V588M1026.500 564V588" stroke-width="2.700"/>
          <path d="M1141.500 561L1298.500 560.500 1299 591 1141.500 591Z" stroke-width="2.600"/><path d="M1277 561L1278 591" stroke-width="2.400"/><path d="M1282 573.500H1294L1288 580Z" fill="#000" stroke="none"/>
          <g stroke-width="3" stroke-linejoin="round">
            <path d="M705 630.500Q750 629 800 631.500L799.500 661Q750 662.500 704.500 660.500Z"/>
            <path d="M705 679.500H885L885.500 709.500Q780 711.500 704.500 709Z"/>
            <path d="M705 725.500L1074.500 726 1075 755.500Q880 757 704.500 755Z"/>
            <path d="M705 773.500L884.500 774 885.500 803.500Q780 804 704.500 803Z"/>
            <path d="M705 823.500L1074.500 824 1075 853.500 704.500 853Z"/>
          </g>
          <path d="M838 870H933.500V898.500H838Z" fill="#000" stroke="none"/><path d="M835.500 867.500L930 868.500 929 894 836 894.500Z" fill="#fff" stroke-width="2.600"/>
          <path d="M1284 932L1292 922M1290 934L1300 922" stroke-width="4" stroke-linecap="round"/>
          <g class="hand">
            <text x="857" y="466.500" textLength="88">A Web Page</text>
            <text x="694" y="499" textLength="54">https://</text>
            <text class="big" x="551" y="599" textLength="233">Book Review</text>
            <g class="link"><text x="853" y="581" textLength="44">Home</text><text x="920.500" y="581" textLength="95">Upload Book</text><text x="1038" y="581" textLength="91">Delete Book</text></g>
            <text x="1147" y="581" textLength="123">Book Categories</text>
            <text x="554" y="651" textLength="68">Category</text>
            <text x="554" y="699" textLength="87">Book Name</text>
            <text x="552" y="746" textLength="110">Book Summary</text>
            <text x="554" y="793" textLength="48">Author</text>
            <text x="554" y="843" textLength="105">Book cover url</text>
            <text x="846" y="887" textLength="71">Add Book</text>
          </g>
        </svg>
        <div class="vscroll"><svg width="20" height="20"><path d="M5 12L10 7 15 12" fill="none" stroke="#999" stroke-width="1.500"/></svg><div class="track"><div class="thumb"></div></div><svg width="20" height="20"><path d="M5 8L10 13 15 8" fill="none" stroke="#999" stroke-width="1.500"/></svg></div>
      </div>
      <div class="bottom"><svg width="22" height="20"><path d="M14 5L9 10 14 15" fill="none" stroke="#888" stroke-width="1.500"/></svg><div class="track"><div class="thumb"></div></div><svg width="20" height="20"><path d="M7 5L12 10 7 15" fill="none" stroke="#888" stroke-width="1.500"/></svg></div>
    </div>
    <div class="props">
      <div class="props-head">Add Book</div>
      <div class="notes"><strong>Notes</strong><em>Click here to edit notes.</em></div>
      <div class="alt"><div class="alt-head"><strong>Alternate Versions</strong><svg width="20" height="20"><path d="M10 0V20M0 10H20" stroke="#666" stroke-width="1.500"/></svg></div><p>Click '+' to create an alternate version of this<br>wireframe</p></div>
    </div>
  </div>
</div>

<div class="taskbar">
  <div class="apps">
    <span><svg viewBox="0 0 20 20"><path d="M0 3L8.500 1.700V9.500H0ZM9.500 1.500L20 0V9.500H9.500ZM0 10.500H8.500V18.300L0 17ZM9.500 10.500H20V20L9.500 18.500Z"/></svg></span>
    <span><svg viewBox="0 0 20 20" fill="none" stroke="#111" stroke-width="1.500"><circle cx="12" cy="7" r="6.200"/><path d="M7.500 11.500L0 19.500"/></svg></span>
    <span><svg viewBox="0 0 20 20" fill="none" stroke="#111" stroke-width="1.400"><path d="M0 0V3.500H12V0M0 5.500H12V14.500H0ZM0 20V16.500H12V20M17.500 0V5M17.500 11V20M16 8H19"/></svg></span>
    <span class="run two"><svg viewBox="0 0 20 20"><path d="M0 2H8L10 4H19V18H0Z" fill="#f9c63c"/><path d="M0 6H19V18H0Z" fill="#ffe08a"/><path d="M4 18V12H15V18H12V15H7V18Z" fill="#2f8ad8"/></svg></span>
    <span><svg viewBox="0 0 20 20"><path d="M6 4V1H14V4" fill="none" stroke="#38a9e8" stroke-width="1.500"/><rect x="1" y="4" width="18" height="16" rx="2" fill="#12508f"/><path d="M5.500 7H9.500V11H5.500Z" fill="#f25022"/><path d="M10.500 7H14.500V11H10.500Z" fill="#7fba00"/><path d="M5.500 12H9.500V16H5.500Z" fill="#00a4ef"/><path d="M10.500 12H14.500V16H10.500Z" fill="#ffb900"/></svg></span>
    <span class="run"><svg viewBox="0 0 20 20"><circle cx="10" cy="11" r="9" fill="#ff8a1e"/><path d="M10 0Q19 4 19 12Q18 20 10 20Q14 14 13 8Z" fill="#ffcf3a"/><path d="M2 5Q1 12 3 16Q6 20 12 19Q4 16 6 8Z" fill="#f2304a"/><circle cx="10.500" cy="11" r="4.500" fill="#6b3fd1"/></svg></span>
    <span><svg viewBox="0 0 20 20"><rect width="20" height="20" rx="2" fill="#1f1f1f"/><path d="M5 15V5L15 15V5" fill="none" stroke="#777" stroke-width="1.700"/></svg></span>
    <span><svg viewBox="0 0 20 20"><path d="M0 7L10 0 20 7V19H0Z" fill="#0b62b8"/><path d="M2 7H18L10 14Z" fill="#fff"/><path d="M0 7L20 19H0ZM20 7V19L10 14Z" fill="#28a8ea"/></svg></span>
    <span class="run two"><svg viewBox="0 0 20 20"><path d="M5 1H19L14 18H0Z" fill="#8fc6d2"/><path d="M0 18H14L19 2V15L16 20Z" fill="#4a6c78"/><path d="M6 1H19L18 4H5Z" fill="#dfe8ea"/></svg></span>
    <span class="run"><svg viewBox="0 0 20 20"><circle cx="10" cy="10" r="10" fill="#1178c8"/><path d="M1 7Q5-1 13 .500Q20 3 20 10Q19 14 14 13Q14 7 9 6 4 5 1 7Z" fill="#3cc48a"/><path d="M9 8Q7 14 14 16Q17 16 18 15Q15 20 10 20Q5 17 6 12Q6 9 9 8Z" fill="#0b4c92"/><path d="M11 9Q14 11 12 14Q16 15 19 13" fill="#e0dada"/></svg></span>
    <span class="run"><svg viewBox="0 0 20 20"><circle cx="10" cy="10" r="10" fill="#34a853"/><path d="M1.300 5A10 10 0 0 1 18.700 5L10 6Z" fill="#ea4335"/><path d="M1.300 5L7 12 10 10 10 6Z" fill="#ea4335"/><path d="M18.700 5A10 10 0 0 1 9 20L14 11 10 5Z" fill="#fbc116"/><circle cx="10" cy="10" r="5" fill="#fff"/><circle cx="10" cy="10" r="3.800" fill="#4285f4"/></svg></span>
    <span class="run"><svg viewBox="0 0 20 20"><path d="M6 0H20V20H6Z" fill="#2b7cd3"/><path d="M6 5H20V10H6Z" fill="#41a5ee"/><path d="M6 10H20V15H6Z" fill="#185abd"/><rect y="5" width="12" height="11" fill="#174ea6"/><text x="1" y="14" font-size="10" font-weight="bold" fill="#fff">W</text></svg></span>
    <span class="run"><svg viewBox="0 0 20 20"><rect x="1" width="18" height="20" rx="3" fill="#b30b00"/><path d="M5 15Q11 10 10 4Q9 8 15 12Q10 10 5 15Z" fill="none" stroke="#fff" stroke-width="1.300"/></svg></span>
    <span class="run two"><svg viewBox="0 0 20 20"><ellipse cx="9" cy="11.500" rx="9" ry="8" fill="#a5cfe6" stroke="#7fa9bf" stroke-width=".6"/><circle cx="4.500" cy="10" r="1.800" fill="#e24a3b"/><circle cx="9" cy="7" r="1.800" fill="#52b043"/><circle cx="5" cy="14.500" r="1.800" fill="#3b78e2"/><circle cx="14" cy="14" r="1.500" fill="#f3c433"/><path d="M17.500 0L9 19" stroke="#c97a2b" stroke-width="2"/></svg></span>
    <span class="run"><svg viewBox="0 0 20 20"><circle cx="10" cy="10" r="10" fill="#fff"/><g stroke-width="2.400" stroke-linecap="round"><path d="M8 4V8M4 8H8" stroke="#36c5f0"/><path d="M12 4V8M16 8H12" stroke="#2eb67d"/><path d="M12 16V12M16 12H12" stroke="#ecb22e"/><path d="M8 16V12M4 12H8" stroke="#e01e5a"/></g></svg></span>
    <span class="run"><svg viewBox="0 0 20 20"><path d="M1 2H19V18H1Z" fill="#0b0b0b"/><path d="M1 2H19V4H1Z" fill="#888"/><path d="M3 7H9M11 8H15" stroke="#ddd" stroke-width="1.500"/></svg></span>
    <span class="run current"><svg viewBox="0 0 20 20"><use href="#smile"/></svg></span>
  </div>
  <div class="tray">
    <svg width="27" height="28"><path d="M0 13Q2 3 13.500 3T27 13Q23 10 20 13 17 10 13.500 13 10 10 7 13 4 10 0 13Z" fill="#4da3ea"/><path d="M13.500 0V24Q13 28 9 26" fill="none" stroke="#7a7f86" stroke-width="2"/></svg>
    <span class="weather">Raining now</span>
    <svg width="16" height="10"><path d="M1 9L8 1.500 15 9" fill="none" stroke="#111" stroke-width="1.500"/></svg>
    <svg width="20" height="20"><path d="M1 3.500L5.500 1 10 3.500 14.500 1 19 3.500 14.500 6 19 8.500 14.500 11 10 8.500 5.500 11 1 8.500 5.500 6ZM10 14L14 12 17 14 13.500 17Z"/><path d="M10 3.500L14.500 6 10 8.500 5.500 6Z" fill="#d8d8d8"/><rect y="8" width="10" height="12" rx="2" fill="#e0142d"/><text x="2" y="18" font-size="11" font-weight="bold" fill="#fff">4</text></svg>
    <svg width="20" height="20"><path d="M1 3L19 1V17L1 18Z" fill="none" stroke="#111" stroke-width="1.400"/><path d="M13 8A4 4 0 0 0 6 9M6 12A4 4 0 0 0 13 11M13 5V8.500H10M6 15V12H9" fill="none" stroke="#111" stroke-width="1.300"/><circle cx="15.500" cy="15.500" r="4.500" fill="#2f74b8"/></svg>
    <svg width="20" height="16"><path d="M6 6H17V13H6Z" fill="#111"/><path d="M4.500 6V14.500H18.500V4.500H8M20 7V12M1 1V4M5 1V4M0 4.500H6M3 5V8" fill="none" stroke="#111"/></svg>
    <svg width="20" height="18" fill="none" stroke="#111" stroke-width="1.200"><path d="M1 6H4L8 2V16L4 12H1ZM11 6Q13 9 11 12M14 4Q17 9 14 14"/><path d="M17 2Q21 9 17 16" stroke="#999"/></svg>
    <svg width="22" height="20"><path d="M4 13Q0 13 0 9.500T4 6Q5 1 10 1T16 5Q20 6 19 12H4Z" fill="#777" stroke="#222"/><circle cx="15.500" cy="14" r="5.800" fill="#d9202b"/><path d="M13 11.500L18 16.500M18 11.500L13 16.500" stroke="#fff" stroke-width="1.500"/></svg>
    <span class="lang">ENG</span><span class="clock">10:18</span>
    <svg width="20" height="20"><path d="M0 0H20V16H13L10 19.500 7 16H0Z"/><path d="M4 4.500H16M4 8H16M4 11.500H11" stroke="#ddd" stroke-width="1.400"/></svg>
    <i class="show-desktop"></i>
  </div>
</div>
</body>
</html>
```
FILE: styles.css
```css
* { box-sizing: border-box; }
body {
  margin: 0;
  width: 1920px;
  height: 1080px;
  overflow: hidden;
  position: relative;
  font-family: "Open Sans", "Noto Sans", sans-serif;
  font-size: 14px;
  color: #000;
}
svg { display: block; flex: none; }
.defs { position: absolute; }

/* browser window */
.chrome { height: 1042px; display: flex; flex-direction: column; background: #fff; }
.tabstrip { height: 43px; background: #e6e9ec; display: flex; align-items: center; padding-left: 10px; }
.active-tab { width: 40px; height: 43px; background: #fff; border-radius: 8px 8px 0 0; display: flex; align-items: center; justify-content: center; }
.tab { width: 20px; height: 25px; border-right: 1px solid #8a8d90; flex: none; display: flex; align-items: center; padding-left: 3px; }
.tab.slim { width: 18.75px; padding-left: 2px; }
.tab svg { width: 13px; height: 20px; }
.tab.faint svg { opacity: .65; }
.newtab { margin-left: 19px; }
.win-buttons { margin-left: auto; display: flex; gap: 43px; padding-right: 22px; margin-top: -7px; }

.navbar { height: 45px; display: flex; align-items: center; padding-left: 18px; gap: 22px; }
.omnibox { width: 1650px; height: 35px; margin-left: -3px; border-radius: 18px; background: #f1f3f4; display: flex; align-items: center; padding: 0 14px 0 16px; gap: 22px; flex: none; }
.url { flex: 1; margin-left: -8px; font-size: 16.8px; color: #202124; }
.url em { font-style: normal; color: #5f6368; }
.puzzle { margin-left: -4px; }
.profile { width: 28px; height: 28px; border-radius: 50%; background: #7b1fa2; color: #fff; font-size: 15px; line-height: 27px; text-align: center; margin-left: -5px; }
.dots { fill: #5f6368; }

.bookmarks { height: 41px; border-bottom: 1px solid #dadce0; padding: 0 0 5px 20px; display: grid; grid-template-columns: 81px 189px 189px 190px 190px 193px 191px 344px 22px 172px 132px; align-items: center; color: #3c4043; }
.bm { display: flex; align-items: center; gap: 11px; white-space: nowrap; }
.bm.ruled { border-left: 1px solid #c8cbce; padding-left: 15px; gap: 13px; }

.page { flex: 1; display: flex; min-height: 0; }
.site { width: 1899px; display: flex; flex-direction: column; }
.page-scroll { flex: 1; background: #f0f0f0; display: flex; flex-direction: column; align-items: center; padding: 9px 0 8px; }
.page-scroll .thumb { width: 17px; height: 137px; margin-top: 5px; background: #c1c1c1; }
.page-scroll .down { margin-top: auto; }
.gh-header { height: 78px; background: #24292f; display: flex; align-items: center; padding: 0 39px 0 40px; }
.gh-search { margin-left: 20px; width: 400px; height: 38px; border: 1px solid #57606a; border-radius: 7px; padding-left: 15px; line-height: 36px; font-size: 16px; color: #c8cdd2; }
.gh-user { margin-left: auto; margin-bottom: 10px; }
.repo-head { height: 140px; background: #f6f8fa; border-bottom: 1px solid #d0d7de; display: flex; flex-direction: column; justify-content: space-between; padding: 22px 52px 0 42px; }
.repo-line { display: flex; align-items: center; font-size: 24px; line-height: 34px; color: #0969da; }
.repo-line span { margin-left: 12px; }
.split { margin-left: auto; width: 80px; height: 34px; border: 1px solid #d5d9dd; border-radius: 7px; display: flex; align-items: center; justify-content: flex-end; padding-right: 17px; }
.repo-tab { width: 110px; height: 60px; margin-left: -2px; border-bottom: 2px solid #fd8c73; display: flex; align-items: center; gap: 8px; padding-left: 20px; font-size: 16.5px; color: #24292f; }
.repo-body { flex: 1; display: flex; align-items: flex-end; padding-left: 190px; color: #24292f; font-weight: 600; }
.readme { width: 1120px; height: 690px; border: solid #d0d7de; border-width: 0 1px; padding: 640px 0 0 40px; font-size: 38px; line-height: 50px; }
.side { height: 45px; padding-left: 30px; font-size: 18.4px; line-height: 27px; }

/* application window */
.app { position: absolute; left: 132px; top: 104px; width: 1687px; height: 905px; border: 1px solid #5c5f62; background: #eee; display: flex; flex-direction: column; box-shadow: 0 6px 22px rgba(0, 0, 0, .36); }
.titlebar { height: 37px; background: #fff; display: flex; align-items: center; padding: 0 24px 2px 9px; gap: 47px; color: #222; }
.titlebar .title { flex: 1; margin-left: -41px; color: #000; letter-spacing: .15px; padding-top: 1px; }
.dark { background: #3a4046; color: #fff; height: 112px; }
.menu { display: flex; height: 25px; padding-left: 9px; gap: 16.5px; line-height: 24px; letter-spacing: .15px; }
.project { height: 49px; display: flex; align-items: center; padding: 0 10px 0 11px; }
.project .name { flex: 1; margin-left: 11px; font-size: 17.7px; }
.edit { width: 65px; height: 25px; margin-right: 10px; background: #808080; display: flex; align-items: center; justify-content: center; }
.toolbar { display: flex; height: 38px; padding: 0 10px 11px; }
.group { display: flex; align-items: center; gap: 10px; }
.group.left { width: 448px; }
.group.mid { flex: 1; }
.sep { width: 1px; height: 25px; background: #666b70; margin: 0 5px; }
.off { opacity: .18; }
.quick { width: 163px; height: 33px; background: #666; display: flex; align-items: center; gap: 4px; padding-left: 4px; font-size: 17px; flex: none; }
.trial { height: 37px; background: #057bbb; color: #fff; display: flex; align-items: center; padding: 0 15px 0 12px; letter-spacing: .12px; }
.trial b { width: 23px; text-align: center; font-weight: 400; }
.trial svg { margin-left: auto; }

.catbar { height: 30px; background: #c9cacc; border-bottom: 1px solid #dcdcdc; display: flex; align-items: center; padding: 0 12px 0 347px; justify-content: space-between; }
.cats { display: grid; grid-template-columns: 27px 64px 53px 32px 60px 73px 81px 52px 46px 33px 55px 62px 52px 66px 37px; gap: 3px; margin-top: 2px; }
.cats span, .more-controls { height: 23px; line-height: 23px; background: #e1e1e1; text-align: center; white-space: nowrap; }
.cats .on { background: #999; color: #fff; }
.more-controls { width: 141px; display: flex; align-items: center; gap: 7px; padding-left: 6px; margin-top: 2px; }

.library { height: 98px; display: flex; padding: 14px 0 0 1px; overflow: hidden; }
.library figure { margin: 0; width: 100.1px; flex: none; display: flex; flex-direction: column; align-items: center; }
.library figure svg { width: 86px; height: 56px; font-family: Lato, sans-serif; overflow: visible; }
.library figcaption { margin-top: 8px; font-size: 12px; line-height: 18px; white-space: nowrap; }

.hscroll { height: 23px; display: flex; border-bottom: 2px solid #e8e8e8; }
.hscroll i { width: 22px; font-style: normal; font-size: 20px; line-height: 18px; text-align: center; color: #999; background: #f0f0f0; }
.hscroll .track { flex: 1; background: #e2e2e2; }
.hscroll .thumb { width: 294px; height: 21px; background: #999; }

.work { flex: 1; display: flex; min-height: 0; }
.nav { width: 199px; display: flex; flex-direction: column; border-right: 1px solid #ddd; }
.nav-head { height: 45px; background: #c9cacc; display: flex; align-items: center; padding-left: 20px; font-size: 15.5px; gap: 12px; }
.nav-list { flex: 1; border: 1px dotted #333; display: flex; }
.items { width: 176px; font-size: 15px; letter-spacing: .1px; }
.items div { height: 37.2px; line-height: 37px; padding-left: 32px; }
.items .sel { border: 2px solid #057bbb; outline: 2px solid #a9d3f6; outline-offset: -4px; background: radial-gradient(circle at 1px 1px, #d8ecfb 1px, transparent 1px) 7px 4px / 3px 3px no-repeat, #63adef; background: #63adef; color: #fff; line-height: 34px; padding-left: 30px; margin-left: -1px; width: 177px; }
.nav-scroll { flex: 1; display: flex; flex-direction: column; background: #f2f2f2; }
.nav-scroll div { flex: 1; background: #e2e2e2; }

.canvas { width: 1111px; display: flex; flex-direction: column; }
.sheet { height: 544px; display: flex; background: #fff; }
.hand { font-family: Lato, sans-serif; font-size: 16px; fill: #000; stroke: #000; stroke-width: .2px; }
.hand .big { font-size: 39px; stroke-width: .9px; }
.hand .link { fill: #1a5596; stroke: #1a5596; text-decoration: underline; }
.vscroll { width: 21px; display: flex; flex-direction: column; background: #f0f0f0; }
.vscroll .track { flex: 1; background: #e2e2e2; }
.vscroll .thumb { height: 275px; background: #999; }
.bottom { flex: 1; display: flex; background: #f0f0f0; padding-right: 21px; }
.bottom .track { flex: 1; background: #e2e2e2; border-top: 1px solid #ccc; }
.bottom .thumb { width: 772px; height: 22px; background: #999; margin-top: -1px; }

.props { flex: 1; border-left: 2px solid #c9cacc; display: flex; flex-direction: column; }
.props-head { height: 45px; background: #c9cacc; padding-left: 12px; font-weight: 700; font-size: 15px; line-height: 46px; }
.notes { height: 334px; border-bottom: 2px solid #c9cacc; padding: 21px 0 0 12px; display: flex; flex-direction: column; gap: 17px; line-height: 20px; }
.notes em { font-size: 17px; }
.props strong { font-size: 15px; }
.alt { padding: 12px 13px 0 12px; }
.alt-head { display: flex; justify-content: space-between; align-items: center; line-height: 20px; }
.alt p { margin: 13px 0 0; line-height: 20px; letter-spacing: .13px; }

/* taskbar */
.taskbar { height: 38px; display: flex; justify-content: space-between; background: linear-gradient(90deg, #d3d3d3, #dcd7d7 30%, #ded4d4 60%, #d5d5d5 85%); }
.apps { display: flex; }
.apps span { width: 46px; height: 38px; display: flex; align-items: center; justify-content: center; border: solid transparent; border-width: 3px 0; position: relative; }
.apps svg { width: 20px; height: 20px; }
.apps .run::after { content: ""; position: absolute; left: 5px; right: 5px; bottom: -3px; height: 3px; background: #0078d7; }
.apps .two::after { background: linear-gradient(90deg, #0078d7 72%, #5fa9e6 72%); }
.apps .current { background: #f2eeee; border-color: #f2eeee; }
.apps .current::after { left: 0; right: 0; }
.tray { display: flex; align-items: center; gap: 10px; padding-right: 5px; }
.weather { font-size: 17px; width: 102px; margin-left: 1px; white-space: nowrap; }
.lang { margin-left: 3px; width: 35px; }
.clock { width: 47px; }
.show-desktop { width: 1px; height: 38px; margin-left: 15px; background: #aaa; }
```
